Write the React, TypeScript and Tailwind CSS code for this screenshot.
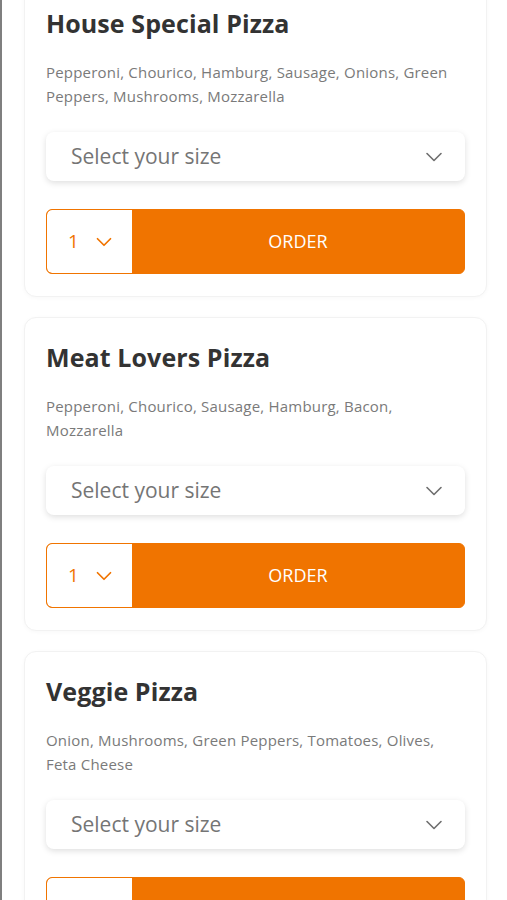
import { ChevronDown } from "lucide-react";

type Pizza = {
  name: string;
  toppings: string;
};

const pizzas: Pizza[] = [
  {
    name: "House Special Pizza",
    toppings: "Pepperoni, Chourico, Hamburg, Sausage, Onions, Green Peppers, Mushrooms, Mozzarella",
  },
  {
    name: "Meat Lovers Pizza",
    toppings: "Pepperoni, Chourico, Sausage, Hamburg, Bacon, Mozzarella",
  },
  {
    name: "Veggie Pizza",
    toppings: "Onion, Mushrooms, Green Peppers, Tomatoes, Olives, Feta Cheese",
  },
];

export default function App() {
  return (
    <div className="h-[900px] overflow-hidden bg-white border-l-2 border-[#7f7f7f] font-['Open_Sans',sans-serif]">
      <div className="flex flex-col gap-5 pl-[22px] pr-5 -mt-[17px]">
        {pizzas.map((pizza) => {
          return <PizzaCard key={pizza.name} pizza={pizza} />;
        })}
      </div>
    </div>
  );
}

function PizzaCard({ pizza }: { pizza: Pizza }) {
  return (
    <div className="rounded-xl border border-[#f2f2f2] bg-white px-[21px] pt-[23px] pb-[22px] shadow-[0_1px_4px_rgba(0,0,0,0.03)]">
      <h2 className="text-[25px] leading-8 font-bold tracking-[0.1px] text-[#333333]">{pizza.name}</h2>
      <p className="mt-[21px] text-[15px] leading-6 tracking-[0.2px] text-[#7a7a7a]">{pizza.toppings}</p>

      <button className="mt-6 flex h-[49px] w-full items-center justify-between rounded-lg bg-white pl-[25px] pr-[17px] shadow-[0_2px_6px_rgba(0,0,0,0.13)]">
        <span className="text-[21px] text-[#757575]">Select your size</span>
        <ChevronDown size={28} strokeWidth={1.4} className="text-[#6f6f6f]" />
      </button>

      <div className="mt-[28px] flex h-[65px] overflow-hidden rounded-md border border-[#f07400] bg-[#f07400]">
        <div className="flex w-[85px] items-center gap-3 rounded-l-[5px] bg-white pl-[21px]">
          <span className="text-[19px] text-[#f07400]">1</span>
          <ChevronDown size={26} strokeWidth={1.6} className="text-[#f07400]" />
        </div>
        <button className="flex flex-1 items-center justify-center text-[18px] font-medium text-white">
          ORDER
        </button>
      </div>
    </div>
  );
}
